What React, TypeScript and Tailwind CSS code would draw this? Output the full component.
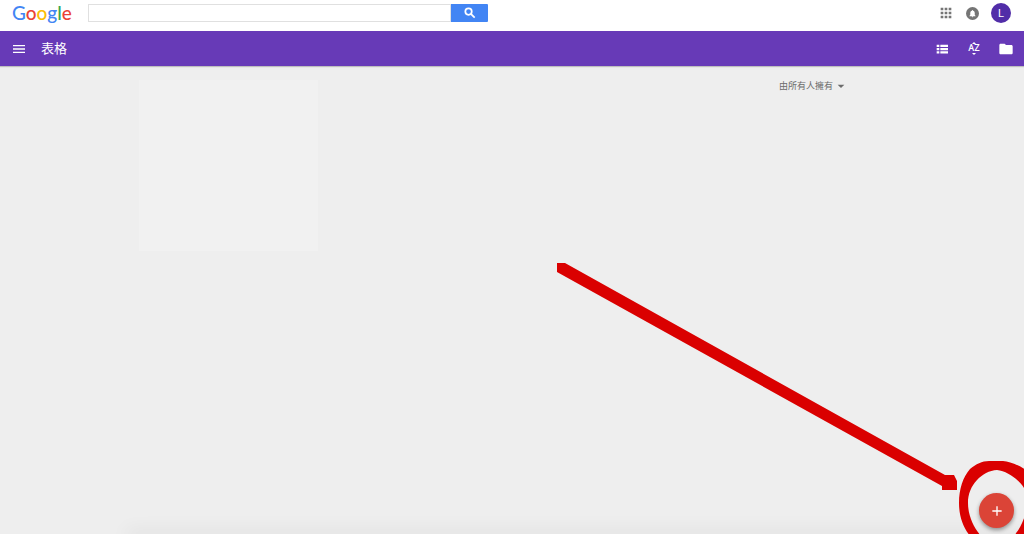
import { MdAdd, MdApps, MdArrowDropDown, MdFolder, MdMenu, MdNotifications } from 'react-icons/md';

// ─── Logo ─────────────────────────────────────────────────────────────────────
const logoLetters = [
  { char: 'G', color: 'text-[#4285f4]' },
  { char: 'o', color: 'text-[#ea4335]' },
  { char: 'o', color: 'text-[#fbbc05]' },
  { char: 'g', color: 'text-[#4285f4]' },
  { char: 'l', color: 'text-[#34a853]' },
  { char: 'e', color: 'text-[#ea4335]' },
];

function Logo() {
  return (
    <a href="#" className="w-[76px] shrink-0 font-[Lato,sans-serif] text-[19px] leading-6 font-medium">
      {logoLetters.map((letter, i) => (
        <span key={i} className={letter.color}>{letter.char}</span>
      ))}
    </a>
  );
}

// ─── Icons ────────────────────────────────────────────────────────────────────
function SearchIcon() {
  return (
    <svg className="h-3.5 w-3.5" viewBox="0 0 24 24" fill="none" stroke="currentColor" strokeWidth="3" aria-hidden="true">
      <circle cx="9.5" cy="9.5" r="5.5" />
      <path d="m13.5 13.5 6.5 6.5" />
    </svg>
  );
}

function ListIcon() {
  return (
    <svg className="h-4 w-4" viewBox="0 0 24 24" fill="currentColor" aria-hidden="true">
      <path d="M4 5.5h4v3.4H4zM9.5 5.5H21v3.4H9.5zM4 10.4h4v3.4H4zM9.5 10.4H21v3.4H9.5zM4 15.3h4v3.4H4zM9.5 15.3H21v3.4H9.5z" />
    </svg>
  );
}

function SortIcon() {
  return (
    <span className="flex w-4 flex-col items-center text-[9px] leading-[9px] font-medium">
      <svg className="h-0.5 w-1" viewBox="0 0 4 2" fill="currentColor" aria-hidden="true">
        <path d="M0 2 2 0 4 2z" />
      </svg>
      <span>AZ</span>
      <svg className="h-0.5 w-1" viewBox="0 0 4 2" fill="currentColor" aria-hidden="true">
        <path d="M0 0h4L2 2z" />
      </svg>
    </span>
  );
}

// ─── Top Bar ──────────────────────────────────────────────────────────────────
function TopBar() {
  return (
    <header className="flex h-[31px] items-center bg-white pr-[13px] pb-[5px] pl-3">
      <Logo />
      <form className="flex h-[18px]" onSubmit={(e) => e.preventDefault()}>
        <input type="text" aria-label="搜尋" className="w-[363px] border border-[#e0e0e0] bg-white px-2 text-xs outline-none" />
        <button type="submit" aria-label="搜尋" className="flex w-[37px] items-center justify-center rounded-r-[1px] bg-[#4285f4] text-white">
          <SearchIcon />
        </button>
      </form>
      <div className="ml-auto flex items-center gap-3">
        <button aria-label="應用程式" className="text-[#757575]">
          <MdApps className="h-4 w-4" />
        </button>
        <button aria-label="通知" className="flex h-[13px] w-[13px] items-center justify-center rounded-full bg-[#757575] text-white">
          <MdNotifications className="h-[9px] w-[9px]" />
        </button>
        <button aria-label="帳戶" className="flex h-5 w-5 items-center justify-center rounded-full bg-[#512da8] pt-px text-[11px] leading-none text-white">
          L
        </button>
      </div>
    </header>
  );
}

// ─── App Bar ──────────────────────────────────────────────────────────────────
function AppBar() {
  return (
    <div className="relative flex h-[35px] items-center bg-[#673ab7] pr-[10px] pl-[11px] text-white shadow-[0_1px_1px_rgba(0,0,0,0.2)]">
      <button aria-label="主選單">
        <MdMenu className="h-4 w-4" />
      </button>
      <h1 className="ml-3.5 text-[13px] leading-5">表格</h1>
      <div className="ml-auto flex items-center gap-4">
        <button aria-label="清單檢視">
          <ListIcon />
        </button>
        <button aria-label="排序">
          <SortIcon />
        </button>
        <button aria-label="開啟檔案選擇器">
          <MdFolder className="h-4 w-4" />
        </button>
      </div>
    </div>
  );
}

// ─── Annotation ───────────────────────────────────────────────────────────────
function Annotation() {
  return (
    <svg className="pointer-events-none absolute right-0 bottom-0 h-[274px] w-[474px]" viewBox="550 260 474 274" fill="#da0000" aria-hidden="true">
      <path d="M557 263h8L945 475h9l3 6v9h-15v-4L557 272z" />
      <path
        fillRule="evenodd"
        d="M959 503C959 489 963 477 970 469C976 464 982 461 989 461H1003C1011 462 1020 465 1030 473V536H970C963 527 959 516 959 503ZM968 503C968 485 982 471 997 470C1008 471 1020 481 1024 488L1028 500C1027 513 1022 526 1014 536H981C974 528 968 516 968 503Z"
      />
    </svg>
  );
}

// ─── App Component ────────────────────────────────────────────────────────────
function App() {
  return (
    <div className="relative flex min-h-screen flex-col overflow-hidden bg-[#eee] font-['Roboto','Noto_Sans_CJK_TC',sans-serif]">
      <TopBar />
      <AppBar />
      <main className="mx-auto flex w-full max-w-[746px] items-start justify-between pt-3.5">
        <div className="h-[171px] w-[179px] bg-[#f1f1f1]" />
        <div className="relative mr-9 flex items-center text-[#6b6b6b]">
          <select aria-label="擁有者" className="appearance-none bg-transparent pr-[15px] text-[9px] leading-3 outline-none">
            <option>由所有人擁有</option>
          </select>
          <MdArrowDropDown className="pointer-events-none absolute right-0 h-4 w-4" />
        </div>
      </main>
      <div className="mt-auto -mb-px ml-32 h-px shadow-[0_0_18px_2px_rgba(0,0,0,0.12)]" />
      <Annotation />
      <button aria-label="建立新表格" className="absolute right-[10px] bottom-1.5 flex h-[35px] w-[35px] items-center justify-center rounded-full bg-[#db4437] text-white shadow-[0_2px_4px_rgba(0,0,0,0.4)]">
        <MdAdd className="h-4 w-4" />
      </button>
    </div>
  );
}

export default App;
